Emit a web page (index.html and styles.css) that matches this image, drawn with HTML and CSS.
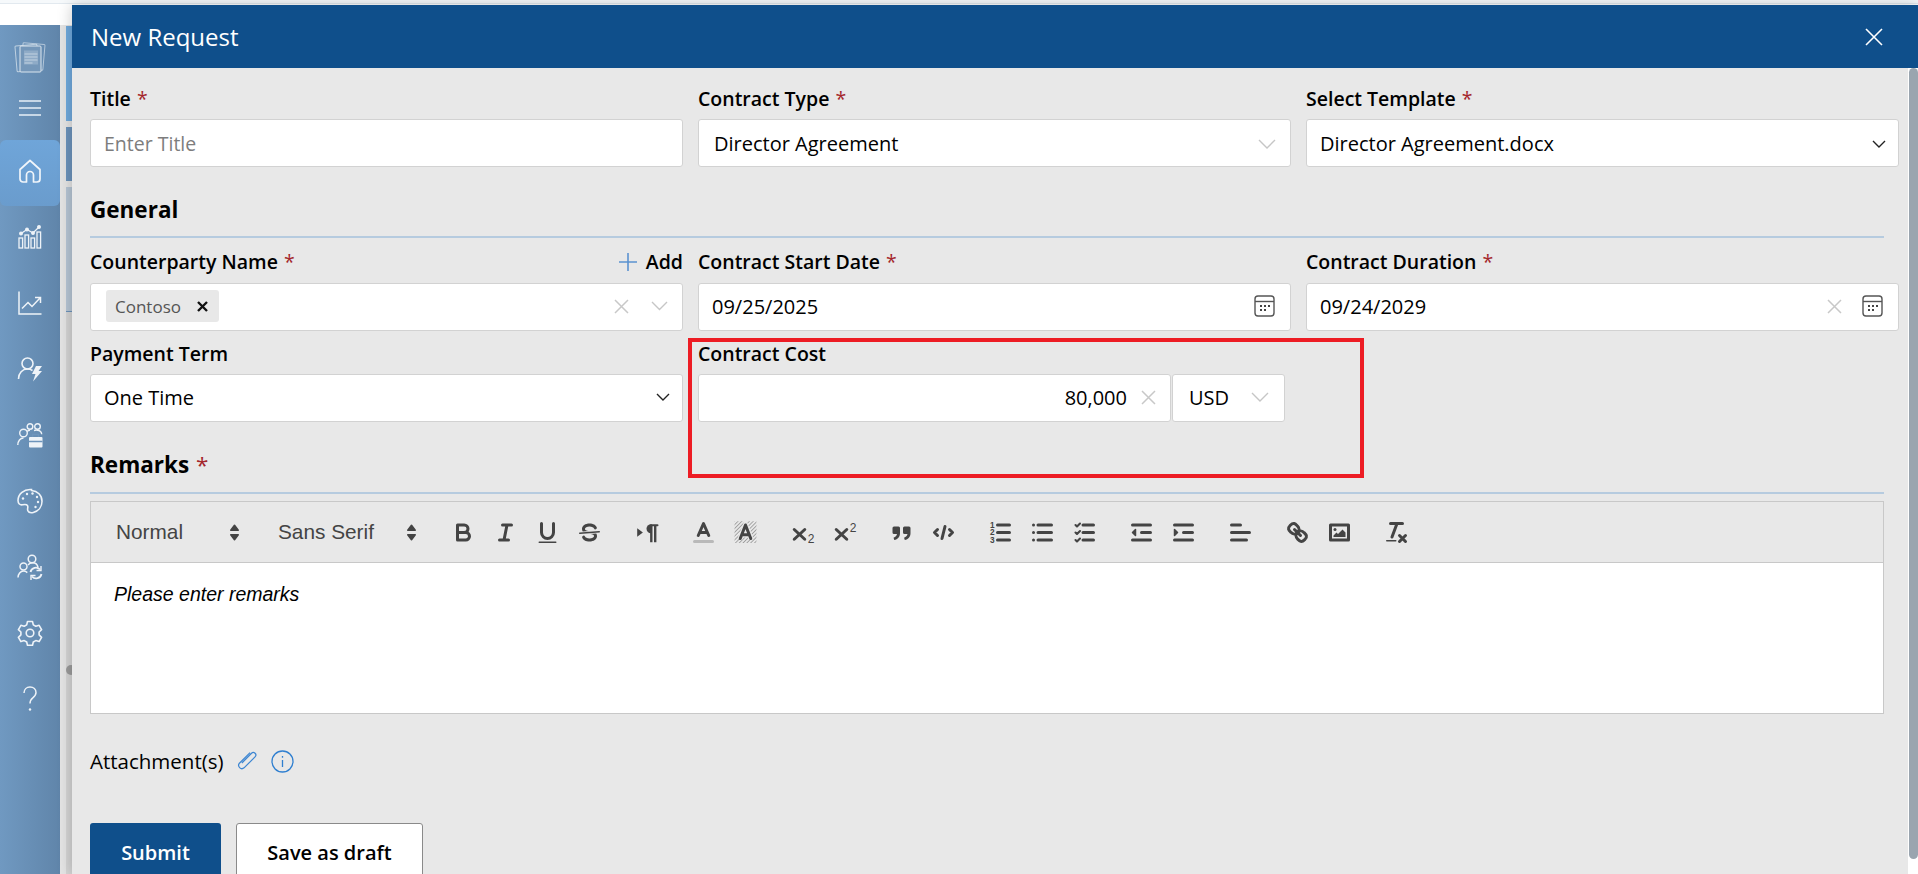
FILE: index.html
```html
<!DOCTYPE html>
<html lang="en">
<head>
    <meta charset="UTF-8">
    <meta name="viewport" content="width=device-width, initial-scale=1.0">
    <title>New Request</title>
    <link rel="stylesheet" href="styles.css">
</head>
<body>
    <div class="top-strip"></div>
    <div class="app">
        <!-- Left navigation -->
        <nav class="sidebar">
            <div class="side-logo">
                <svg width="32" height="32" viewBox="0 0 32 32" fill="none" stroke="#dbe5ee" stroke-width="1"><rect x="8" y="2.500" width="22" height="26" rx="1" transform="rotate(5 19 15)" opacity=".65"/><rect x="2" y="4" width="22" height="26" rx="1" transform="rotate(-5 13 17)" opacity=".75"/><rect x="6" y="5" width="21" height="26" rx="1" fill="#7597b9"/><rect x="10" y="9.500" width="14" height="14" fill="#8fabc7" stroke="none"/><path d="M10.500 13h13M10.500 16h13M10.500 19h13M10.500 22h8" stroke="#c2d2e1"/></svg>
            </div>
            <div class="side-menu">
                <svg width="24" height="24" viewBox="0 0 24 24" fill="none" stroke="#e8f0f7" stroke-width="1.400"><path d="M1 5h22M1 12h22M1 19h22"/></svg>
            </div>
            <a class="side-item active">
                <svg width="26" height="26" viewBox="0 0 26 26" fill="none" stroke="#f0f5fa" stroke-width="1.700"><path d="M3 11.500 13 2.500l10 9V21a3 3 0 0 1-3 3h-3.500v-7a3.500 3.500 0 0 0-7 0v7H6a3 3 0 0 1-3-3z" stroke-linejoin="round"/></svg>
            </a>
            <a class="side-item">
                <svg width="26" height="26" viewBox="0 0 26 26" fill="none" stroke="#eef3f8" stroke-width="1.300"><rect x="2" y="14" width="3.600" height="10"/><rect x="8" y="11" width="3.600" height="13"/><rect x="14" y="14" width="3.600" height="10"/><rect x="20" y="8" width="3.600" height="16"/><path d="M4 9.500 10 5.500 16 9 22 3"/><circle cx="4" cy="9.500" r="1.300" fill="#eef3f8"/><circle cx="10" cy="5.500" r="1.300" fill="#eef3f8"/><circle cx="16" cy="9" r="1.300" fill="#eef3f8"/><circle cx="22" cy="3" r="1.300" fill="#eef3f8"/></svg>
            </a>
            <a class="side-item">
                <svg width="26" height="26" viewBox="0 0 26 26" fill="none" stroke="#eef3f8" stroke-width="1.500"><path d="M2 1.500V24h22.500"/><path d="M5 18.500l6-6 4 4 8-8.500M18 7.500h5.500V13"/></svg>
            </a>
            <a class="side-item">
                <svg width="26" height="26" viewBox="0 0 26 26" fill="none" stroke="#eef3f8" stroke-width="1.600"><circle cx="10.500" cy="7.500" r="5.500"/><path d="M1.500 23c0-6 4-10 9-10 2 0 3.500.5 5 1.500"/><path d="M19 10h6l-3.500 5H25L16 25.500l2.500-7.500H15z" fill="#eef3f8" stroke="none"/></svg>
            </a>
            <a class="side-item">
                <svg width="26" height="26" viewBox="0 0 26 26" fill="none" stroke="#eef3f8" stroke-width="1.400"><circle cx="6.500" cy="11" r="3.800"/><circle cx="13" cy="4.500" r="2.800"/><circle cx="20.500" cy="4.500" r="2.800"/><path d="M.8 23c0-4 2.500-7 5.700-7M10 9.500c1-.8 2-1.200 3-1.200M17 8.500c1-.4 2-.5 3.500-.3 2.500.3 4 2 4.200 4"/><rect x="12" y="15" width="13.500" height="10.500" rx="1" fill="#eef3f8" stroke="none"/><path d="M15.500 15v-2.500h6V15M12 19.500h13.500" stroke="#6d94bb"/></svg>
            </a>
            <a class="side-item">
                <svg width="26" height="26" viewBox="0 0 26 26" fill="none" stroke="#eef3f8" stroke-width="1.600"><path d="M14.500 1.500C7 .8 1 6 1 12.500c0 3 2 4.800 4.500 4.300 2-.4 4.200-.7 5 .8 1 1.800-.5 3 .3 5 .8 1.800 3 2.500 5.500 1.900 5-1.300 8.700-5.500 8.700-11.300 0-6.200-4.500-10.200-10.500-10.700z"/><circle cx="6" cy="10.500" r="1.200" fill="#eef3f8" stroke="none"/><circle cx="10" cy="6" r="1.200" fill="#eef3f8" stroke="none"/><circle cx="15.500" cy="5.500" r="1.200" fill="#eef3f8" stroke="none"/><circle cx="20" cy="9" r="1.200" fill="#eef3f8" stroke="none"/><circle cx="21" cy="14" r="1.200" fill="#eef3f8" stroke="none"/><circle cx="18.500" cy="19" r="1.200" fill="#eef3f8" stroke="none"/></svg>
            </a>
            <a class="side-item">
                <svg width="26" height="26" viewBox="0 0 26 26" fill="none" stroke="#eef3f8" stroke-width="1.500"><circle cx="15" cy="5" r="3.800"/><circle cx="6.500" cy="12.500" r="3.500"/><path d="M1 23.500c0-3.500 2.500-6.500 5.500-6.500 1.500 0 2.800.6 3.800 1.600M11 11c1-1.500 2.500-2.300 4.500-2.300 2.800 0 5 1.800 5.500 4.500"/><path d="M13.500 18a5.500 5.500 0 0 1 9.500-2.500M24.500 20a5.500 5.500 0 0 1-9.500 2.500" stroke-width="1.800"/><path d="M24 12v4.500h-4.500M14 26v-4.500h4.500" stroke-width="1.400"/></svg>
            </a>
            <a class="side-item">
                <svg width="26" height="26" viewBox="0 0 26 26" fill="none" stroke="#eef3f8" stroke-width="1.600" stroke-linejoin="round"><path d="M10.500 1.500h5l.8 3.400 2.500 1.400 3.300-1 2.500 4.300-2.500 2.400v2.900l2.500 2.400-2.500 4.300-3.300-1-2.500 1.400-.8 3.400h-5l-.8-3.400-2.500-1.400-3.300 1-2.500-4.300 2.500-2.400v-2.900L1.400 9.600l2.500-4.300 3.300 1 2.500-1.400z"/><circle cx="13" cy="13" r="3.800"/></svg>
            </a>
            <a class="side-item">
                <svg width="26" height="26" viewBox="0 0 26 26" fill="none" stroke="#eef3f8" stroke-width="1.500"><path d="M7 7c0-3.500 2.500-6 6-6s6 2.400 6 5.500c0 2.600-1.500 4-3.200 5.300C14 13.200 13 14.500 13 17.500"/><circle cx="13" cy="23.500" r="1.200" fill="#eef3f8" stroke="none"/></svg>
            </a>
        </nav>

        <!-- Page behind the panel, only a sliver shows -->
        <div class="backdrop">
            <div class="back-block back-light"></div>
            <div class="back-block back-mid"></div>
            <div class="back-block back-pale"></div>
            <div class="back-rest"></div>
            <span class="back-handle"></span>
        </div>

        <main class="panel">
            <header class="panel-head">
                <h1>New Request</h1>
                <svg class="panel-close" width="18" height="18" viewBox="0 0 18 18" fill="none" stroke="#fff" stroke-width="1.600"><path d="M1 1l16 16M17 1 1 17"/></svg>
            </header>
            <div class="panel-body">
                <form class="form">
                    <div class="form-row first-row">
                        <div class="field">
                            <label class="field-label">Title <span class="req">*</span></label>
                            <div class="input"><span class="placeholder">Enter Title</span></div>
                        </div>
                        <div class="field">
                            <label class="field-label">Contract Type <span class="req">*</span></label>
                            <div class="input inset-16">
                                <span class="value">Director Agreement</span>
                                <svg class="chev faint" width="18" height="10" viewBox="0 0 18 10"><path d="M1 1l8 8 8-8"/></svg>
                            </div>
                        </div>
                        <div class="field">
                            <label class="field-label">Select Template <span class="req">*</span></label>
                            <div class="input">
                                <span class="value">Director Agreement.docx</span>
                                <svg class="chev dark" width="14" height="8" viewBox="0 0 14 8"><path d="M1 1l6 6 6-6"/></svg>
                            </div>
                        </div>
                    </div>

                    <h2 class="section-title">General</h2>

                    <div class="form-row general-row">
                        <div class="field">
                            <div class="label-row">
                                <label class="field-label">Counterparty Name <span class="req">*</span></label>
                                <a class="add-link"><svg width="18" height="18" viewBox="0 0 18 18" stroke="#5b92d0" stroke-width="1.600"><path d="M9 0v18M0 9h18"/></svg>Add</a>
                            </div>
                            <div class="input tag-input">
                                <span class="tag">Contoso <svg width="11" height="11" viewBox="0 0 11 11" stroke="#111" stroke-width="2.400"><path d="M1 1l9 9M10 1l-9 9"/></svg></span>
                                <svg class="clear" width="15" height="15" viewBox="0 0 15 15"><path d="M1 1l13 13M14 1 1 14"/></svg>
                                <svg class="chev faint" width="17" height="10" viewBox="0 0 17 10"><path d="M1 1l7.500 7.500L16 1"/></svg>
                            </div>
                        </div>
                        <div class="field">
                            <label class="field-label">Contract Start Date <span class="req">*</span></label>
                            <div class="input">
                                <span class="value">09/25/2025</span>
                                <svg class="cal" width="21" height="22" viewBox="0 0 21 22"><rect x="1" y="1" width="19" height="20" rx="3"/><path d="M1 6.500h19"/><g class="cal-dots"><rect x="6" y="10" width="2" height="2"/><rect x="10" y="10" width="2" height="2"/><rect x="14" y="10" width="2" height="2"/><rect x="6" y="14" width="2" height="2"/><rect x="10" y="14" width="2" height="2"/></g></svg>
                            </div>
                        </div>
                        <div class="field">
                            <label class="field-label">Contract Duration <span class="req">*</span></label>
                            <div class="input">
                                <span class="value">09/24/2029</span>
                                <svg class="clear date-clear" width="15" height="15" viewBox="0 0 15 15"><path d="M1 1l13 13M14 1 1 14"/></svg>
                                <svg class="cal" width="21" height="22" viewBox="0 0 21 22"><rect x="1" y="1" width="19" height="20" rx="3"/><path d="M1 6.500h19"/><g class="cal-dots"><rect x="6" y="10" width="2" height="2"/><rect x="10" y="10" width="2" height="2"/><rect x="14" y="10" width="2" height="2"/><rect x="6" y="14" width="2" height="2"/><rect x="10" y="14" width="2" height="2"/></g></svg>
                            </div>
                        </div>
                    </div>

                    <div class="form-row tight-row">
                        <div class="field">
                            <label class="field-label">Payment Term</label>
                            <div class="input">
                                <span class="value">One Time</span>
                                <svg class="chev dark" width="14" height="8" viewBox="0 0 14 8"><path d="M1 1l6 6 6-6"/></svg>
                            </div>
                        </div>
                        <div class="field cost-field">
                            <label class="field-label">Contract Cost</label>
                            <div class="cost-inputs">
                                <div class="input cost-amount">
                                    <span class="value">80,000</span>
                                    <svg class="clear" width="15" height="15" viewBox="0 0 15 15"><path d="M1 1l13 13M14 1 1 14"/></svg>
                                </div>
                                <div class="input cost-currency">
                                    <span class="value">USD</span>
                                    <svg class="chev faint" width="18" height="10" viewBox="0 0 18 10"><path d="M1 1l8 8 8-8"/></svg>
                                </div>
                            </div>
                            <div class="highlight-box"></div>
                        </div>
                    </div>

                    <h2 class="section-title remarks-title">Remarks <span class="req">*</span></h2>

                    <!-- Rich text editor -->
                    <div class="editor">
                        <div class="toolbar">
                            <span class="picker picker-header">Normal<svg width="27" height="27" viewBox="0 0 18 18"><polygon class="ql-both" points="6.500 7.500 9 4.200 11.500 7.500"/><polygon class="ql-both" points="6.500 10.500 9 13.800 11.500 10.500"/></svg></span>
                            <span class="picker picker-font">Sans Serif<svg width="27" height="27" viewBox="0 0 18 18"><polygon class="ql-both" points="6.500 7.500 9 4.200 11.500 7.500"/><polygon class="ql-both" points="6.500 10.500 9 13.800 11.500 10.500"/></svg></span>
                            <span class="tool-group">
                                <span class="tool"><svg viewBox="0 0 18 18"><path class="ql-line" d="M5 4h4.500A2.500 2.500 0 0 1 12 6.500 2.500 2.500 0 0 1 9.500 9H5z"/><path class="ql-line" d="M5 9h5.500A2.500 2.500 0 0 1 13 11.500 2.500 2.500 0 0 1 10.500 14H5z"/></svg></span>
                                <span class="tool"><svg viewBox="0 0 18 18"><path class="ql-line" d="M7 4h6M5 14h6M8 14l2-10"/></svg></span>
                                <span class="tool"><svg viewBox="0 0 18 18"><path class="ql-line" d="M5 3v6a4 4 0 0 0 8 0V3"/><rect class="ql-solid" x="3" y="15" width="12" height="1" rx=".5"/></svg></span>
                                <span class="tool"><svg viewBox="0 0 18 18"><path class="ql-line ql-thin" d="M15.500 8.500 2.500 9.500"/><path class="ql-solid" d="M9 8C6.500 7.800 6 7.500 6 6.500 6 5.800 7.300 5 9 5c1.600 0 2.800.7 3 1.300a1 1 0 0 0 1.900-.6C13.400 4.100 11.400 3 9 3 6.200 3 4 4.500 4 6.500a3.200 3.200 0 0 0 .5 1.800z"/><path class="ql-solid" d="M9 10c2.500.2 3 .5 3 1.500 0 .7-1.300 1.500-3 1.500-1.600 0-2.800-.7-3-1.300a1 1 0 0 0-1.900.6C4.600 13.900 6.600 15 9 15c2.800 0 5-1.500 5-3.500a3.200 3.200 0 0 0-.5-1.800z"/></svg></span>
                            </span>
                            <span class="tool-group">
                                <span class="tool"><svg viewBox="0 0 18 18"><polygon class="ql-solid" points="2.800 6.200 6.600 9 2.800 11.800"/><path class="ql-solid" d="M12 3.500a3 3 0 0 0 0 6h.5v-6z"/><path class="ql-line ql-mid" d="M12 4.200h4.300"/><rect class="ql-solid" x="11.400" y="4" width="1.600" height="11.500"/><rect class="ql-solid" x="14" y="4" width="1.600" height="11.500"/></svg></span>
                            </span>
                            <span class="tool-group">
                                <span class="tool"><svg viewBox="0 0 18 18"><path class="ql-line" d="M5.500 11 9 3l3.500 8M11.600 9H6.400"/><path class="ql-color-bar" d="M3 15h12"/></svg></span>
                                <span class="tool"><svg viewBox="0 0 18 18"><defs><pattern id="hatch" width="1.800" height="1.800" patternUnits="userSpaceOnUse" patternTransform="rotate(45)"><path d="M0 0v1.800" stroke="#555" stroke-width=".6"/></pattern></defs><rect x="1.700" y="1.500" width="14.600" height="14.500" fill="url(#hatch)"/><path class="ql-halo" d="M5.500 13 9 4l3.500 9M11.600 10.500H6.400"/><path class="ql-line" d="M5.500 13 9 4l3.500 9M11.600 10.500H6.400"/></svg></span>
                            </span>
                            <span class="tool-group">
                                <span class="tool"><svg viewBox="0 0 18 18"><path class="ql-line" d="M3.500 7l7 6.500M10.500 7l-7 6.500"/><text class="tool-digit" x="12.500" y="16.300">2</text></svg></span>
                                <span class="tool"><svg viewBox="0 0 18 18"><path class="ql-line" d="M3.500 7l7 6.500M10.500 7l-7 6.500"/><text class="tool-digit" x="12.500" y="8.400">2</text></svg></span>
                            </span>
                            <span class="tool-group">
                                <span class="tool"><svg viewBox="0 0 18 18"><path class="ql-solid" d="M4 5h3a1 1 0 0 1 1 1v3.500C8 12 6.500 13.500 4.200 14l-.5-1.500C5 12 5.800 11.300 6 10H4a1 1 0 0 1-1-1V6a1 1 0 0 1 1-1z"/><path class="ql-solid" d="M11 5h3a1 1 0 0 1 1 1v3.500c0 2.500-1.500 4-3.800 4.500l-.5-1.500C12 12 12.800 11.300 13 10h-2a1 1 0 0 1-1-1V6a1 1 0 0 1 1-1z"/></svg></span>
                                <span class="tool"><svg viewBox="0 0 18 18"><path class="ql-line" d="M5 7 3 9l2 2M13 7l2 2-2 2M10 5l-2 8"/></svg></span>
                            </span>
                            <span class="tool-group">
                                <span class="tool"><svg viewBox="0 0 18 18"><path class="ql-line" d="M7 4h8M7 9h8M7 14h8"/><text class="tool-num" x="3.500" y="5.800">1</text><text class="tool-num" x="3.500" y="10.800">2</text><text class="tool-num" x="3.500" y="15.800">3</text></svg></span>
                                <span class="tool"><svg viewBox="0 0 18 18"><path class="ql-line" d="M6 4h9M6 9h9M6 14h9M3 4h.01M3 9h.01M3 14h.01"/></svg></span>
                                <span class="tool"><svg viewBox="0 0 18 18"><path class="ql-line" d="M8 4h7M8 9h7M8 14h7"/><path class="ql-line ql-mid" d="M3 4l1 1 2-2M3 9l1 1 2-2M3 14l1 1 2-2"/></svg></span>
                            </span>
                            <span class="tool-group">
                                <span class="tool"><svg viewBox="0 0 18 18"><path class="ql-line" d="M3 14h12M3 4h12M9 9h6"/><polygon class="ql-both" points="5 7 5 11 3 9"/></svg></span>
                                <span class="tool"><svg viewBox="0 0 18 18"><path class="ql-line" d="M3 14h12M3 4h12M9 9h6"/><polygon class="ql-both" points="3 7 3 11 5 9"/></svg></span>
                            </span>
                            <span class="tool-group">
                                <span class="tool"><svg viewBox="0 0 18 18"><path class="ql-line" d="M3 9h12M3 14h10M3 4h6"/></svg></span>
                            </span>
                            <span class="tool-group">
                                <span class="tool"><svg viewBox="0 0 18 18"><path class="ql-line" d="M7 7l4 4"/><path class="ql-line" d="M8.900 4.600a3.500 3.500 0 0 1 .4 4.700 3.500 3.500 0 0 1-4.700-.4C3.200 7.500 2 6.400 4.200 4.200s3.300-1 4.700.4z"/><path class="ql-line" d="M13.400 9.100a3.500 3.500 0 0 0-4.700-.4 3.500 3.500 0 0 0 .4 4.700c1.400 1.400 2.500 2.500 4.700.4s1-3.300-.4-4.700z"/></svg></span>
                                <span class="tool"><svg viewBox="0 0 18 18"><rect class="ql-line" x="3" y="4" width="12" height="10"/><circle class="ql-solid" cx="6" cy="7" r="1"/><polygon class="ql-solid" points="5 12 5 11 7 9 8 10 11 7 13 9 13 12"/></svg></span>
                            </span>
                            <span class="tool-group">
                                <span class="tool"><svg viewBox="0 0 18 18"><path class="ql-line" d="M5 3h8M6 12 9.350 3M11 11l4 4M15 11l-4 4"/><rect class="ql-solid" x="2" y="14" width="7" height="1" rx=".5"/></svg></span>
                            </span>
                        </div>
                        <div class="editor-area"><em>Please enter remarks</em></div>
                    </div>

                    <div class="attach-row">
                        <span class="attach-label">Attachment(s)</span>
                        <svg class="clip-icon" width="22" height="22" viewBox="0 0 18 18" fill="none" stroke="#3d86d2" stroke-width="1"><path d="M11.500 2.200 2.800 10.800a2.700 2.700 0 0 0 3.800 3.800l9-9a2 2 0 0 0-2.900-2.900L4.800 10.600"/></svg>
                        <svg class="info-icon" width="23" height="23" viewBox="0 0 23 23" fill="none" stroke="#2f7fd0" stroke-width="1.300"><circle cx="11.500" cy="11.500" r="10.500"/><path d="M11.500 10v7M11.500 6v1.800"/></svg>
                    </div>

                    <div class="button-row">
                        <button type="button" class="btn btn-primary">Submit</button>
                        <button type="button" class="btn btn-plain">Save as draft</button>
                    </div>
                </form>
                <div class="scroll-track"><div class="scroll-thumb"></div></div>
            </div>
        </main>
    </div>
</body>
</html>
```

FILE: styles.css
```css
/* Reset and base styles */
* {
    box-sizing: border-box;
    margin: 0;
    padding: 0;
}
html, body {
    height: 100%;
    overflow: hidden;
}
body {
    font-family: "Open Sans", "Liberation Sans", sans-serif;
    background-color: #ffffff;
    color: #000000;
}
.top-strip {
    height: 4px;
    background-color: #f6f9fb;
    border-bottom: 1px solid #e2e9ef;
}
.app {
    display: flex;
    height: 870px;
}

/* Sidebar */
.sidebar {
    width: 60px;
    margin-top: 21px;
    background: linear-gradient(to right, #7099c1, #6085aa);
    display: flex;
    flex-direction: column;
    align-items: center;
    flex-shrink: 0;
}
.side-logo {
    height: 64px;
    padding-top: 16px;
}
.side-menu {
    height: 51px;
    padding-top: 7px;
}
.side-item {
    width: 60px;
    height: 66px;
    padding-bottom: 4px;
    display: flex;
    justify-content: center;
    align-items: center;
}
.side-item.active {
    background: linear-gradient(to bottom, #6fa5d9, #6a9ccd);
    border-radius: 6px;
}

/* Sliver of the page behind the panel */
.backdrop {
    width: 12px;
    margin-top: 21px;
    padding-left: 6px;
    background-color: #e4e4e4;
    display: flex;
    flex-direction: column;
    flex-shrink: 0;
    position: relative;
}
.back-block {
    width: 6px;
    margin-top: 6px;
}
.back-light {
    height: 95px;
    margin-top: 1px;
    background-color: #70a9dc;
}
.back-mid {
    height: 54px;
    background-color: #6c93bb;
}
.back-pale {
    height: 125px;
    background-color: #b6c5d4;
    border-bottom: 1px solid #6c93bb;
}
.back-rest {
    flex: 1;
    background-color: #d4d4d4;
}
.back-handle {
    position: absolute;
    left: 6px;
    top: 640px;
    width: 10px;
    height: 10px;
    border-radius: 50%;
    background-color: #9b9b9b;
}

/* Panel */
.panel {
    flex: 1;
    margin-top: 1px;
    min-width: 0;
    display: flex;
    flex-direction: column;
    box-shadow: 0 0 14px rgba(0, 0, 0, 0.22);
    z-index: 1;
}
.panel-head {
    height: 63px;
    padding: 0 35px 0 19px;
    background-color: #0f4f8b;
    color: #ffffff;
    display: flex;
    justify-content: space-between;
    align-items: center;
    flex-shrink: 0;
}
.panel-head h1 {
    font-size: 24px;
    font-weight: 400;
}
.panel-body {
    flex: 1;
    display: flex;
    min-height: 0;
}
.scroll-track {
    width: 10px;
    background-color: #ffffff;
    padding-left: 1px;
    flex-shrink: 0;
}
.scroll-thumb {
    height: 791px;
    background-color: #9aa5af;
    border-radius: 5px;
}

/* Form */
.form {
    flex: 1;
    min-width: 0;
    background-color: #e8e8e8;
    padding: 17px 0 0 18px;
    overflow: hidden;
}
.form-row {
    display: grid;
    grid-template-columns: repeat(3, 593px);
    column-gap: 15px;
    margin-top: 9px;
}
.first-row {
    margin-top: 0;
}
.first-row .input {
    padding-top: 1px;
}
.general-row .input,
.tight-row .input {
    padding-bottom: 2px;
}
.general-row {
    margin-top: 10px;
}
.general-row .field-label {
    margin-bottom: 8px;
}
.general-row .add-link {
    margin-bottom: 8px;
}
.field {
    display: flex;
    flex-direction: column;
}
.label-row {
    display: flex;
    justify-content: space-between;
}
.field-label {
    display: block;
    height: 27px;
    line-height: 27px;
    margin-bottom: 7px;
    font-size: 19.500px;
    font-weight: 600;
    white-space: nowrap;
}
.req {
    color: #a4262c;
    font-weight: 500;
    margin-left: 1px;
}
.add-link {
    height: 27px;
    line-height: 27px;
    font-size: 19.500px;
    font-weight: 600;
    display: flex;
    align-items: center;
    gap: 9px;
}
.input {
    height: 48px;
    background-color: #ffffff;
    border: 1px solid #d2d2d2;
    border-radius: 3px;
    padding: 0 12px 0 13px;
    display: flex;
    align-items: center;
    justify-content: space-between;
    font-size: 20px;
}
.inset-16 {
    padding-left: 15px;
    padding-right: 14px;
}
.placeholder {
    color: #7d7d7d;
    font-size: 19.500px;
}
.chev {
    fill: none;
    stroke-width: 1.400;
    flex-shrink: 0;
}
.chev.faint {
    stroke: #c6c6c6;
}
.chev.dark {
    stroke: #222222;
}
.clear {
    fill: none;
    stroke: #c8c8c8;
    stroke-width: 1.500;
    flex-shrink: 0;
}
.cal {
    fill: none;
    stroke: #555555;
    stroke-width: 1.400;
    flex-shrink: 0;
    margin-right: 3px;
}
.cal-dots rect {
    fill: #444444;
    stroke: none;
}
.date-clear {
    margin-left: auto;
    margin-right: 20px;
}

/* Tag select */
.tag-input {
    padding-left: 15px;
    padding-right: 14px;
    justify-content: flex-start;
}
.tag {
    height: 32px;
    width: 113px;
    padding-left: 9px;
    padding-right: 11px;
    background-color: #e8e8e8;
    border-radius: 3px;
    color: #555555;
    font-size: 17px;
    display: flex;
    align-items: center;
    justify-content: space-between;
    margin-right: auto;
}
.tag-input .clear {
    margin-right: 22px;
}

/* Contract cost */
.cost-field {
    position: relative;
}
.cost-inputs {
    display: flex;
    gap: 1px;
}
.cost-amount {
    width: 473px;
    padding-right: 14px;
    justify-content: flex-end;
    gap: 14px;
}
.cost-currency {
    width: 113px;
    padding-left: 16px;
    padding-right: 15px;
}
/* annotation drawn over the screenshot */
.highlight-box {
    position: absolute;
    left: -10px;
    top: -2px;
    width: 676px;
    height: 140px;
    border: 4px solid #ed1c24;
    pointer-events: none;
}

/* Section headings */
.section-title {
    width: 1794px;
    margin-top: 26px;
    padding-top: 1px;
    padding-bottom: 10px;
    line-height: 32px;
    font-size: 22.500px;
    font-weight: 700;
    border-bottom: 2px solid #b6cbdf;
}
.remarks-title {
    padding-bottom: 11px;
}

/* Rich text editor */
.editor {
    width: 1794px;
    margin-top: 7px;
    border: 1px solid #c8c8c8;
    font-family: "Liberation Sans", Arial, sans-serif;
}
.toolbar {
    height: 61px;
    padding-left: 13px;
    border-bottom: 1px solid #c8c8c8;
    display: flex;
    align-items: center;
    gap: 15px;
}
.picker {
    height: 27px;
    padding-left: 12px;
    padding-right: 3px;
    font-size: 20.800px;
    color: #444444;
    display: flex;
    align-items: center;
    justify-content: space-between;
}
.picker-header {
    width: 147px;
}
.picker-font {
    width: 162px;
    margin-right: -1px;
}
.tool-group {
    display: flex;
}
.tool {
    width: 42px;
    height: 36px;
    display: flex;
    justify-content: center;
    align-items: center;
}
.tool svg {
    width: 27px;
    height: 27px;
}
.ql-line {
    fill: none;
    stroke: #444444;
    stroke-width: 2;
    stroke-linecap: round;
    stroke-linejoin: round;
}
.ql-thin {
    stroke-width: 1;
}
.ql-mid {
    stroke-width: 1.400;
}
.ql-solid {
    fill: #444444;
}
.ql-both {
    fill: #444444;
    stroke: #444444;
    stroke-width: 1;
    stroke-linejoin: round;
}
.ql-halo {
    fill: none;
    stroke: #e8e8e8;
    stroke-width: 3.500;
}
.ql-color-bar {
    fill: none;
    stroke: #b9b9b9;
    stroke-width: 2;
    stroke-linecap: round;
}
.tool-digit {
    font-size: 8px;
    fill: #444444;
}
.tool-num {
    font-size: 5.500px;
    font-weight: 700;
    fill: #444444;
    text-anchor: middle;
}
.editor-area {
    height: 150px;
    padding: 17px 23px;
    background-color: #ffffff;
    font-size: 19.500px;
    line-height: 28px;
}

/* Attachment row */
.attach-row {
    margin-top: 33px;
    height: 28px;
    display: flex;
    align-items: center;
    font-size: 20.500px;
    font-weight: 500;
}
.clip-icon {
    margin-left: 12px;
}
.info-icon {
    margin-left: 13px;
}

/* Buttons */
.button-row {
    margin-top: 48px;
    display: flex;
    gap: 15px;
}
.btn {
    height: 58px;
    font-family: inherit;
    font-size: 20px;
    font-weight: 600;
    border-radius: 3px;
}
.btn-primary {
    width: 131px;
    background-color: #0f4f8b;
    border: none;
    color: #ffffff;
}
.btn-plain {
    width: 187px;
    background-color: #ffffff;
    border: 1px solid #8a8a8a;
    color: #000000;
}
```
